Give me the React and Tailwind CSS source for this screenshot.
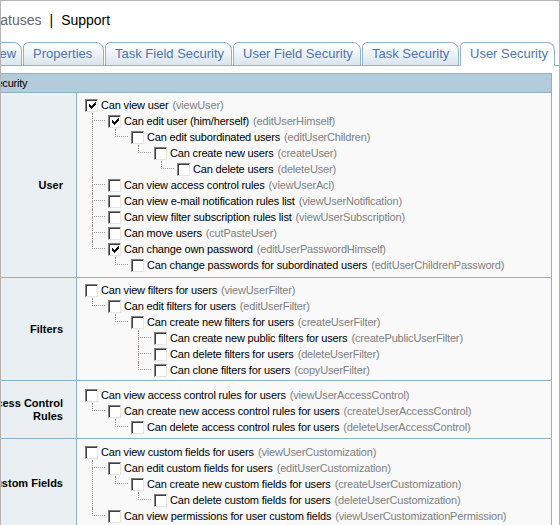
import React from 'react';

const sections = [
  {
    label: 'User',
    pad: 'pt-[4px] pb-[4px]',
    nodes: [
      { t: 'Can view user', k: 'viewUser', c: true, ch: [
        { t: 'Can edit user (him/herself)', k: 'editUserHimself', c: true, ch: [
          { t: 'Can edit subordinated users', k: 'editUserChildren', ch: [
            { t: 'Can create new users', k: 'createUser', ch: [
              { t: 'Can delete users', k: 'deleteUser' },
            ] },
          ] },
        ] },
        { t: 'Can view access control rules', k: 'viewUserAcl' },
        { t: 'Can view e-mail notification rules list', k: 'viewUserNotification' },
        { t: 'Can view filter subscription rules list', k: 'viewUserSubscription' },
        { t: 'Can move users', k: 'cutPasteUser' },
        { t: 'Can change own password', k: 'editUserPasswordHimself', c: true, ch: [
          { t: 'Can change passwords for subordinated users', k: 'editUserChildrenPassword' },
        ] },
      ] },
    ],
  },
  {
    label: 'Filters',
    pad: 'pt-[4px] pb-[2px]',
    nodes: [
      { t: 'Can view filters for users', k: 'viewUserFilter', ch: [
        { t: 'Can edit filters for users', k: 'editUserFilter', ch: [
          { t: 'Can create new filters for users', k: 'createUserFilter', ch: [
            { t: 'Can create new public filters for users', k: 'createPublicUserFilter' },
            { t: 'Can delete filters for users', k: 'deleteUserFilter' },
            { t: 'Can clone filters for users', k: 'copyUserFilter' },
          ] },
        ] },
      ] },
    ],
  },
  {
    label: 'Access Control Rules',
    pad: 'pt-[6px] pb-[3px]',
    nodes: [
      { t: 'Can view access control rules for users', k: 'viewUserAccessControl', ch: [
        { t: 'Can create new access control rules for users', k: 'createUserAccessControl', ch: [
          { t: 'Can delete access control rules for users', k: 'deleteUserAccessControl' },
        ] },
      ] },
    ],
  },
  {
    label: 'Custom Fields',
    pad: 'pt-[5px] pb-[3px]',
    nodes: [
      { t: 'Can view custom fields for users', k: 'viewUserCustomization', ch: [
        { t: 'Can edit custom fields for users', k: 'editUserCustomization', ch: [
          { t: 'Can create new custom fields for users', k: 'createUserCustomization', ch: [
            { t: 'Can delete custom fields for users', k: 'deleteUserCustomization' },
          ] },
        ] },
        { t: 'Can view permissions for user custom fields', k: 'viewUserCustomizationPermission' },
      ] },
    ],
  },
];

function Checkbox({ checked }) {
  return (
    <span className="w-[13px] h-[13px] shrink-0 bg-white border-t border-l border-[#808080] border-r-[#e4e4e4] border-b-[#e4e4e4] border-r border-b shadow-[inset_1px_1px_0_#404040] flex items-center justify-center">
      {checked && (
        <svg width="7" height="7" viewBox="0 0 7 7" className="block ml-[1px] mt-[1px]">
          <path d="M0 2v3h1v1h1v1h1v-1h1v-1h1v-1h1v-1h1v-3h-1v1h-1v1h-1v1h-1v1h-1v-1h-1v-1z" fill="#000" />
        </svg>
      )}
    </span>
  );
}

function Node({ n }) {
  return (
    <div>
      <div className="flex items-center h-[16px] whitespace-nowrap">
        <Checkbox checked={n.c} />
        <span className="ml-[3px] text-black">{n.t}</span>
        <span className="ml-[4px] text-[#808080]">({n.k})</span>
      </div>
      {n.ch && (
        <div className="ml-[7px]">
          {n.ch.map((c, i) => (
            <div className="flex" key={c.k}>
              <div className="w-[16px] shrink-0 flex flex-col">
                <div className="w-[13px] h-[8px] border-l border-b border-dotted border-[#a09a90]" />
                {i < n.ch.length - 1 && <div className="flex-1 border-l border-dotted border-[#a09a90]" />}
              </div>
              <Node n={c} />
            </div>
          ))}
        </div>
      )}
    </div>
  );
}

const tabs = [
  { t: 'Overview', w: 'w-[70px]' },
  { t: 'Properties', w: 'w-[81px]' },
  { t: 'Task Field Security', w: 'w-[127px]' },
  { t: 'User Field Security', w: 'w-[128px]' },
  { t: 'Task Security', w: 'w-[97px]' },
  { t: 'User Security', w: 'w-[95px]', active: true },
];

export default function App() {
  return (
    <div className="w-[560px] h-[525px] overflow-hidden bg-white border-t border-l border-r border-[#b4b4b4] font-['Liberation_Sans',Arial,sans-serif] text-[11px]">
      <div className="h-[41px] pt-[10px] leading-[18px] text-[14px] whitespace-nowrap">
        <span className="ml-[-14px] text-[#666]">Statuses</span>
        <span className="text-black mx-[8px]">|</span>
        <span className="text-black">Support</span>
      </div>
      <div className="flex items-end gap-px h-[24px] border-b border-[#8fb3c8] ml-[-49px]">
        {tabs.map((tb) => (
          <div
            key={tb.t}
            className={`${tb.w} shrink-0 h-[24px] mb-[-1px] border border-[#8fb3c8] rounded-tl-[5px] rounded-tr-[8px] pl-[9px] flex items-center text-[13px] whitespace-nowrap text-[#5074ae] ${
              tb.active ? 'bg-white border-b-white' : 'bg-gradient-to-b from-white to-[#dae5ec]'
            }`}
          >
            {tb.t}
          </div>
        ))}
      </div>
      <div className="ml-[-41px] mr-[7px] mt-[7px]">
        <div className="h-[20px] bg-[#b4ccd9] border border-[#8cb1c8] pl-[3px] flex items-center whitespace-nowrap text-black tracking-[-0.2px]">
          User Security
        </div>
        <div className="border-l border-r border-[#8cb1c8] bg-[#f9f9f9]">
          {sections.map((s) => (
            <div key={s.label} className="flex border-b border-[#8cb1c8]">
              <div className="w-[116px] shrink-0 bg-[#e9eff3] border-r border-[#8cb1c8] flex items-center justify-end pr-[13px] text-right font-bold leading-[13px] text-black">
                {s.label}
              </div>
              <div className={`flex-1 pl-[8px] ${s.pad} tracking-[-0.17px]`}>
                {s.nodes.map((n) => (
                  <Node key={n.k} n={n} />
                ))}
              </div>
            </div>
          ))}
        </div>
      </div>
    </div>
  );
}
